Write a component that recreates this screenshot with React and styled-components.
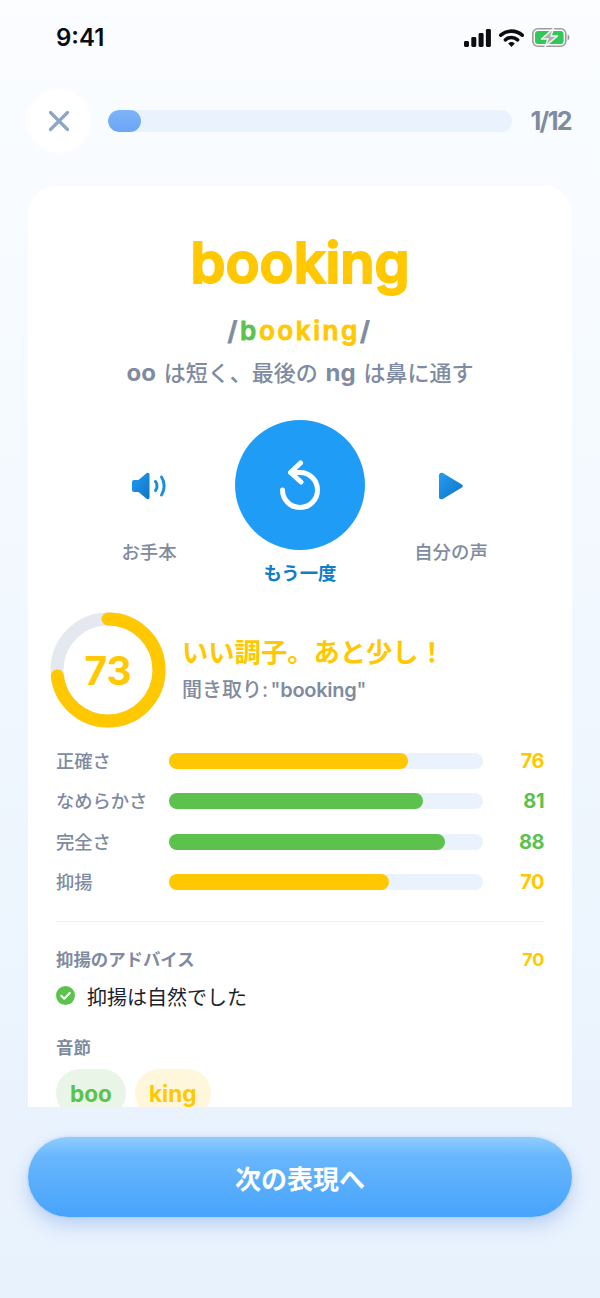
import React from 'react';
import styled, { createGlobalStyle } from 'styled-components';

const JP = `Inter, "Noto Sans CJK JP", sans-serif`;

const GlobalStyle = createGlobalStyle`
    html, body {
        margin: 0;
        padding: 0;
    }
    body {
        font-family: ${JP};
        background: #e8f2fd;
    }
`;

const Screen = styled.div`
    width: 600px;
    height: 1298px;
    display: flex;
    flex-direction: column;
    overflow: hidden;
    background: linear-gradient(180deg, #fbfdff 0%, #f5faff 30%, #eaf3fd 85%, #e8f2fd 100%);
`;

const StatusBar = styled.div`
    height: 76px;
    box-sizing: border-box;
    padding: 24px 30px 0 56px;
    display: flex;
    justify-content: space-between;
    align-items: flex-start;
`;

const Time = styled.div`
    font-size: 24px;
    line-height: 28px;
    font-weight: 600;
    color: #0b0d12;
`;

const StatusIcons = styled.div`
    display: flex;
    align-items: center;
    gap: 8px;
    padding-top: 4px;
`;

const TopRow = styled.div`
    margin-top: 14px;
    height: 62px;
    padding: 0 28px;
    display: flex;
    align-items: center;
`;

const CloseButton = styled.div`
    width: 62px;
    height: 62px;
    border-radius: 50%;
    background: #ffffff;
    box-shadow: 0 0 6px rgba(255, 255, 255, 0.9);
    display: flex;
    align-items: center;
    justify-content: center;
    flex: none;
`;

const Progress = styled.div`
    margin-left: 18px;
    width: 404px;
    height: 22px;
    border-radius: 11px;
    background: #eaf3fd;
    overflow: hidden;
`;

const ProgressFill = styled.div`
    height: 100%;
    border-radius: 11px;
    background: linear-gradient(180deg, #7db4f8, #6ba6f6);
`;

const Count = styled.div`
    margin-left: auto;
    padding-right: 1px;
    font-size: 25px;
    line-height: 30px;
    font-weight: 700;
    letter-spacing: -1.6px;
    color: #7f8ba0;
`;

const Card = styled.div`
    margin: 34px 28px 0;
    height: 921px;
    flex: none;
    box-sizing: border-box;
    padding: 42px 28px 0;
    background: #ffffff;
    border-radius: 28px 28px 0 0;
    overflow: hidden;
`;

const Word = styled.div`
    font-family: Inter, sans-serif;
    font-size: 56px;
    line-height: 70px;
    font-weight: 600;
    letter-spacing: 0;
    text-align: center;
    color: #ffc800;
    -webkit-text-stroke: 2px #ffc800;
`;

const Ipa = styled.div`
    margin-top: 15px;
    font-family: Inter, sans-serif;
    font-size: 26px;
    line-height: 36px;
    font-weight: 600;
    letter-spacing: 2.6px;
    text-align: center;
    color: #7f8ba0;
    -webkit-text-stroke: 0.8px currentColor;
`;

const Phone = styled.span`
    color: ${props => props.color};
`;

const Hint = styled.div`
    margin-top: 8px;
    font-size: 22px;
    line-height: 32px;
    font-weight: 500;
    word-spacing: 2px;
    text-align: center;
    color: #7f8ba0;
`;

const Strong = styled.b`
    font-size: 24px;
    font-weight: 700;
`;

const Controls = styled.div`
    margin-top: 31px;
    display: flex;
    justify-content: center;
`;

const SideControl = styled.div`
    width: 172px;
    padding-top: 52px;
    display: flex;
    flex-direction: column;
    align-items: center;
`;

const SideIcon = styled.div`
    height: 28px;
    display: flex;
    justify-content: center;
`;

const SideLabel = styled.div`
    margin-top: 40px;
    font-size: 18.4px;
    line-height: 24px;
    font-weight: 500;
    color: #7f8ba0;
`;

const MainControl = styled.div`
    width: 130px;
    display: flex;
    flex-direction: column;
    align-items: center;
`;

const BigButton = styled.div`
    width: 130px;
    height: 130px;
    border-radius: 50%;
    background: #1f9cf5;
    display: flex;
    align-items: center;
    justify-content: center;
`;

const MainLabel = styled.div`
    margin-top: 11px;
    font-size: 18.4px;
    line-height: 24px;
    font-weight: 700;
    color: #0f7ec9;
`;

const ScoreRow = styled.div`
    margin: 27px 0 0 -6px;
    display: flex;
    align-items: center;
    gap: 16px;
`;

const Ring = styled.div`
    position: relative;
    width: 116px;
    height: 116px;
    flex: none;
`;

const RingValue = styled.div`
    position: absolute;
    inset: 0;
    display: flex;
    align-items: center;
    justify-content: center;
    font-size: 39px;
    font-weight: 700;
    color: #ffc800;
`;

const ScoreText = styled.div`
    display: flex;
    flex-direction: column;
    gap: 5px;
`;

const Verdict = styled.div`
    font-size: 26.3px;
    line-height: 34px;
    font-weight: 700;
    color: #ffc800;
`;

const Heard = styled.div`
    font-size: 20px;
    line-height: 30px;
    font-weight: 500;
    word-spacing: -3px;
    color: #7f8ba0;
`;

const HeardWord = styled.span`
    font-weight: 600;
    letter-spacing: -0.3px;
`;

const Bars = styled.div`
    margin-top: 21px;
    display: flex;
    flex-direction: column;
    gap: 16.3px;
`;

const BarRow = styled.div`
    display: flex;
    align-items: center;
    height: 24px;
`;

const BarLabel = styled.div`
    width: 113px;
    font-size: 18.3px;
    line-height: 24px;
    font-weight: 500;
    color: #7f8ba0;
    flex: none;
`;

const Track = styled.div`
    flex: 1;
    height: 16px;
    border-radius: 8px;
    background: #eaf3fd;
`;

const TrackFill = styled.div`
    height: 100%;
    border-radius: 8px;
    background: ${props => props.color};
`;

const Score = styled.div`
    width: 61px;
    text-align: right;
    font-size: 20px;
    line-height: 24px;
    font-weight: 700;
    letter-spacing: -0.5px;
    color: ${props => props.color};
    flex: none;
`;

const Divider = styled.div`
    margin-top: 27.5px;
    height: 1px;
    background: #f1f4f7;
`;

const SectionHead = styled.div`
    margin-top: ${props => props.top}px;
    display: flex;
    justify-content: space-between;
    font-size: 17.4px;
    line-height: 24px;
    font-weight: 700;
    color: #7f8ba0;
`;

const AdviceValue = styled.span`
    font-size: 18px;
    letter-spacing: -0.3px;
    color: #ffc800;
`;

const Advice = styled.div`
    margin-top: 14px;
    display: flex;
    align-items: flex-start;
    gap: 12px;
    font-size: 20px;
    line-height: 24px;
    color: #1c222c;
`;

const Chips = styled.div`
    margin-top: 9px;
    display: flex;
    gap: 9px;
`;

const Chip = styled.div`
    height: 48px;
    padding: 0 14px;
    border-radius: 24px;
    display: flex;
    align-items: center;
    font-size: 22.6px;
    font-weight: 700;
    color: ${props => props.color};
    background: ${props => props.bg};
`;

const Footer = styled.div`
    padding: 30px 28px 0;
`;

const NextButton = styled.div`
    height: 80px;
    border-radius: 40px;
    display: flex;
    align-items: center;
    justify-content: center;
    font-size: 26px;
    font-weight: 700;
    color: #ffffff;
    background: linear-gradient(180deg, #8fcdfe 0%, #68b6fd 25%, #47a4fb 100%);
    box-shadow: 0 8px 18px rgba(66, 118, 214, 0.28), 0 0 3px rgba(66, 118, 214, 0.2);
`;

const StatusGlyphs = () => (
    <StatusIcons>
        <svg width="27" height="18" viewBox="0 0 27 18">
            <rect x="0" y="12" width="5" height="6" rx="1.4" fill="#0b0d12" />
            <rect x="7.3" y="8" width="5" height="10" rx="1.4" fill="#0b0d12" />
            <rect x="14.6" y="4" width="5" height="14" rx="1.4" fill="#0b0d12" />
            <rect x="21.9" y="0" width="5" height="18" rx="1.4" fill="#0b0d12" />
        </svg>
        <svg width="25" height="18" viewBox="0 0 25 18" fill="none">
            <path d="M1.8 6.2C7.8 .8 17.2 .8 23.2 6.2" stroke="#0b0d12" strokeWidth="3.6" strokeLinecap="round" />
            <path d="M6.4 10.8C9.8 7.8 15.2 7.8 18.6 10.8" stroke="#0b0d12" strokeWidth="3.6" strokeLinecap="round" />
            <path d="M9.2 14.4C11.2 12.6 13.8 12.6 15.8 14.4L12.5 18Z" fill="#0b0d12" />
        </svg>
        <svg width="38" height="19" viewBox="0 0 38 19" fill="none">
            <rect x="0.8" y="0.8" width="33" height="17.4" rx="5" stroke="#9aa19c" strokeWidth="1.6" />
            <rect x="3" y="3" width="28.6" height="13" rx="3" fill="#33c759" />
            <path d="M35.6 6.5c1.4.5 1.8 1.6 1.8 3s-.4 2.5-1.8 3z" fill="#9aa19c" />
            <path d="M21.5 0.5L9.5 11H16L13 18.5L25.5 8H19Z" fill="#aeb3af" stroke="#f5f8f5" strokeWidth="1.4" strokeLinejoin="round" />
        </svg>
    </StatusIcons>
);

const bars = [
    { label: '正確さ', value: 76, color: '#ffc800' },
    { label: 'なめらかさ', value: 81, color: '#5cc24d' },
    { label: '完全さ', value: 88, color: '#5cc24d' },
    { label: '抑揚', value: 70, color: '#ffc800' },
];

const RING_LENGTH = 2 * Math.PI * 51;

export default function App() {
    return (
        <Screen>
            <GlobalStyle />
            <StatusBar>
                <Time>9:41</Time>
                <StatusGlyphs />
            </StatusBar>
            <TopRow>
                <CloseButton>
                    <svg width="22" height="22" viewBox="0 0 22 22" fill="none">
                        <path d="M2.5 2.5L19.5 19.5M19.5 2.5L2.5 19.5" stroke="#8ea5c6" strokeWidth="3.2" strokeLinecap="round" />
                    </svg>
                </CloseButton>
                <Progress>
                    <ProgressFill style={{ width: `${(33 / 404) * 100}%` }} />
                </Progress>
                <Count>1/12</Count>
            </TopRow>
            <Card>
                <Word>booking</Word>
                <Ipa>
                    /<Phone color="#5cc24d">b</Phone><Phone color="#ffc800">ooking</Phone>/
                </Ipa>
                <Hint><Strong>oo</Strong> は短く、最後の <Strong>ng</Strong> は鼻に通す</Hint>
                <Controls>
                    <SideControl>
                        <SideIcon>
                            <svg width="36" height="28" viewBox="0 0 36 28" fill="none">
                                <defs>
                                    <linearGradient id="iconBlue" x1="0" y1="0" x2="1" y2="1">
                                        <stop offset="0" stopColor="#229df3" />
                                        <stop offset="1" stopColor="#0f74c4" />
                                    </linearGradient>
                                </defs>
                                <path d="M3 8H7.5L15.5 1.2C16.8 .2 18.5 1 18.5 2.6V25.4C18.5 27 16.8 27.8 15.5 26.8L7.5 20H3C1.8 20 1 19.2 1 18V10C1 8.8 1.8 8 3 8Z" fill="url(#iconBlue)" />
                                <path d="M24.5 9.5C26.5 12 26.5 16 24.5 18.5" stroke="#1a8ee2" strokeWidth="3" strokeLinecap="round" />
                                <path d="M30.5 5C34 10 34 18 30.5 23" stroke="#1a8ee2" strokeWidth="3" strokeLinecap="round" />
                            </svg>
                        </SideIcon>
                        <SideLabel>お手本</SideLabel>
                    </SideControl>
                    <MainControl>
                        <BigButton>
                            <svg width="48" height="50" viewBox="0 0 48 50" fill="none">
                                <path d="M6.5 30A17.5 17.5 0 1 0 24 12.5H15" stroke="#ffffff" strokeWidth="5" strokeLinecap="round" strokeLinejoin="round" />
                                <path d="M24.5 3L14.5 12.5L25 22" stroke="#ffffff" strokeWidth="5" strokeLinecap="round" strokeLinejoin="round" />
                            </svg>
                        </BigButton>
                        <MainLabel>もう一度</MainLabel>
                    </MainControl>
                    <SideControl>
                        <SideIcon>
                            <svg width="26" height="28" viewBox="0 0 26 28" fill="none">
                                <defs>
                                    <linearGradient id="playBlue" x1="0" y1="0" x2="1" y2="1">
                                        <stop offset="0" stopColor="#229df3" />
                                        <stop offset="1" stopColor="#0f74c4" />
                                    </linearGradient>
                                </defs>
                                <path d="M1 3C1 1 3 0 4.8 1.1L23.5 12.2C25.2 13.2 25.2 14.8 23.5 15.8L4.8 26.9C3 28 1 27 1 25Z" fill="url(#playBlue)" />
                            </svg>
                        </SideIcon>
                        <SideLabel>自分の声</SideLabel>
                    </SideControl>
                </Controls>
                <ScoreRow>
                    <Ring>
                        <svg width="116" height="116" viewBox="0 0 116 116" fill="none">
                            <circle cx="58" cy="58" r="51" stroke="#e4e9ef" strokeWidth="13" />
                            <circle
                                cx="58"
                                cy="58"
                                r="51"
                                stroke="#ffc800"
                                strokeWidth="13"
                                strokeLinecap="round"
                                strokeDasharray={`${RING_LENGTH * 0.73} ${RING_LENGTH}`}
                                transform="rotate(-90 58 58)"
                            />
                        </svg>
                        <RingValue>73</RingValue>
                    </Ring>
                    <ScoreText>
                        <Verdict>いい調子。あと少し！</Verdict>
                        <Heard>聞き取り: "<HeardWord>booking</HeardWord>"</Heard>
                    </ScoreText>
                </ScoreRow>
                <Bars>
                    {bars.map(bar => (
                        <BarRow key={bar.label}>
                            <BarLabel>{bar.label}</BarLabel>
                            <Track>
                                <TrackFill color={bar.color} style={{ width: `${bar.value}%` }} />
                            </Track>
                            <Score color={bar.color}>{bar.value}</Score>
                        </BarRow>
                    ))}
                </Bars>
                <Divider />
                <SectionHead top={26}>
                    <span>抑揚のアドバイス</span>
                    <AdviceValue>70</AdviceValue>
                </SectionHead>
                <Advice>
                    <svg width="19" height="19" viewBox="0 0 18 18" fill="none">
                        <circle cx="9" cy="9" r="9" fill="#5cc24d" />
                        <path d="M5 9.3L7.8 12L13 6.6" stroke="#ffffff" strokeWidth="2" strokeLinecap="round" strokeLinejoin="round" />
                    </svg>
                    抑揚は自然でした
                </Advice>
                <SectionHead top={26}>
                    <span>音節</span>
                </SectionHead>
                <Chips>
                    <Chip color="#5cc24d" bg="#e9f6e7">boo</Chip>
                    <Chip color="#ffc800" bg="#fff7dc">king</Chip>
                </Chips>
            </Card>
            <Footer>
                <NextButton>次の表現へ</NextButton>
            </Footer>
        </Screen>
    );
}
